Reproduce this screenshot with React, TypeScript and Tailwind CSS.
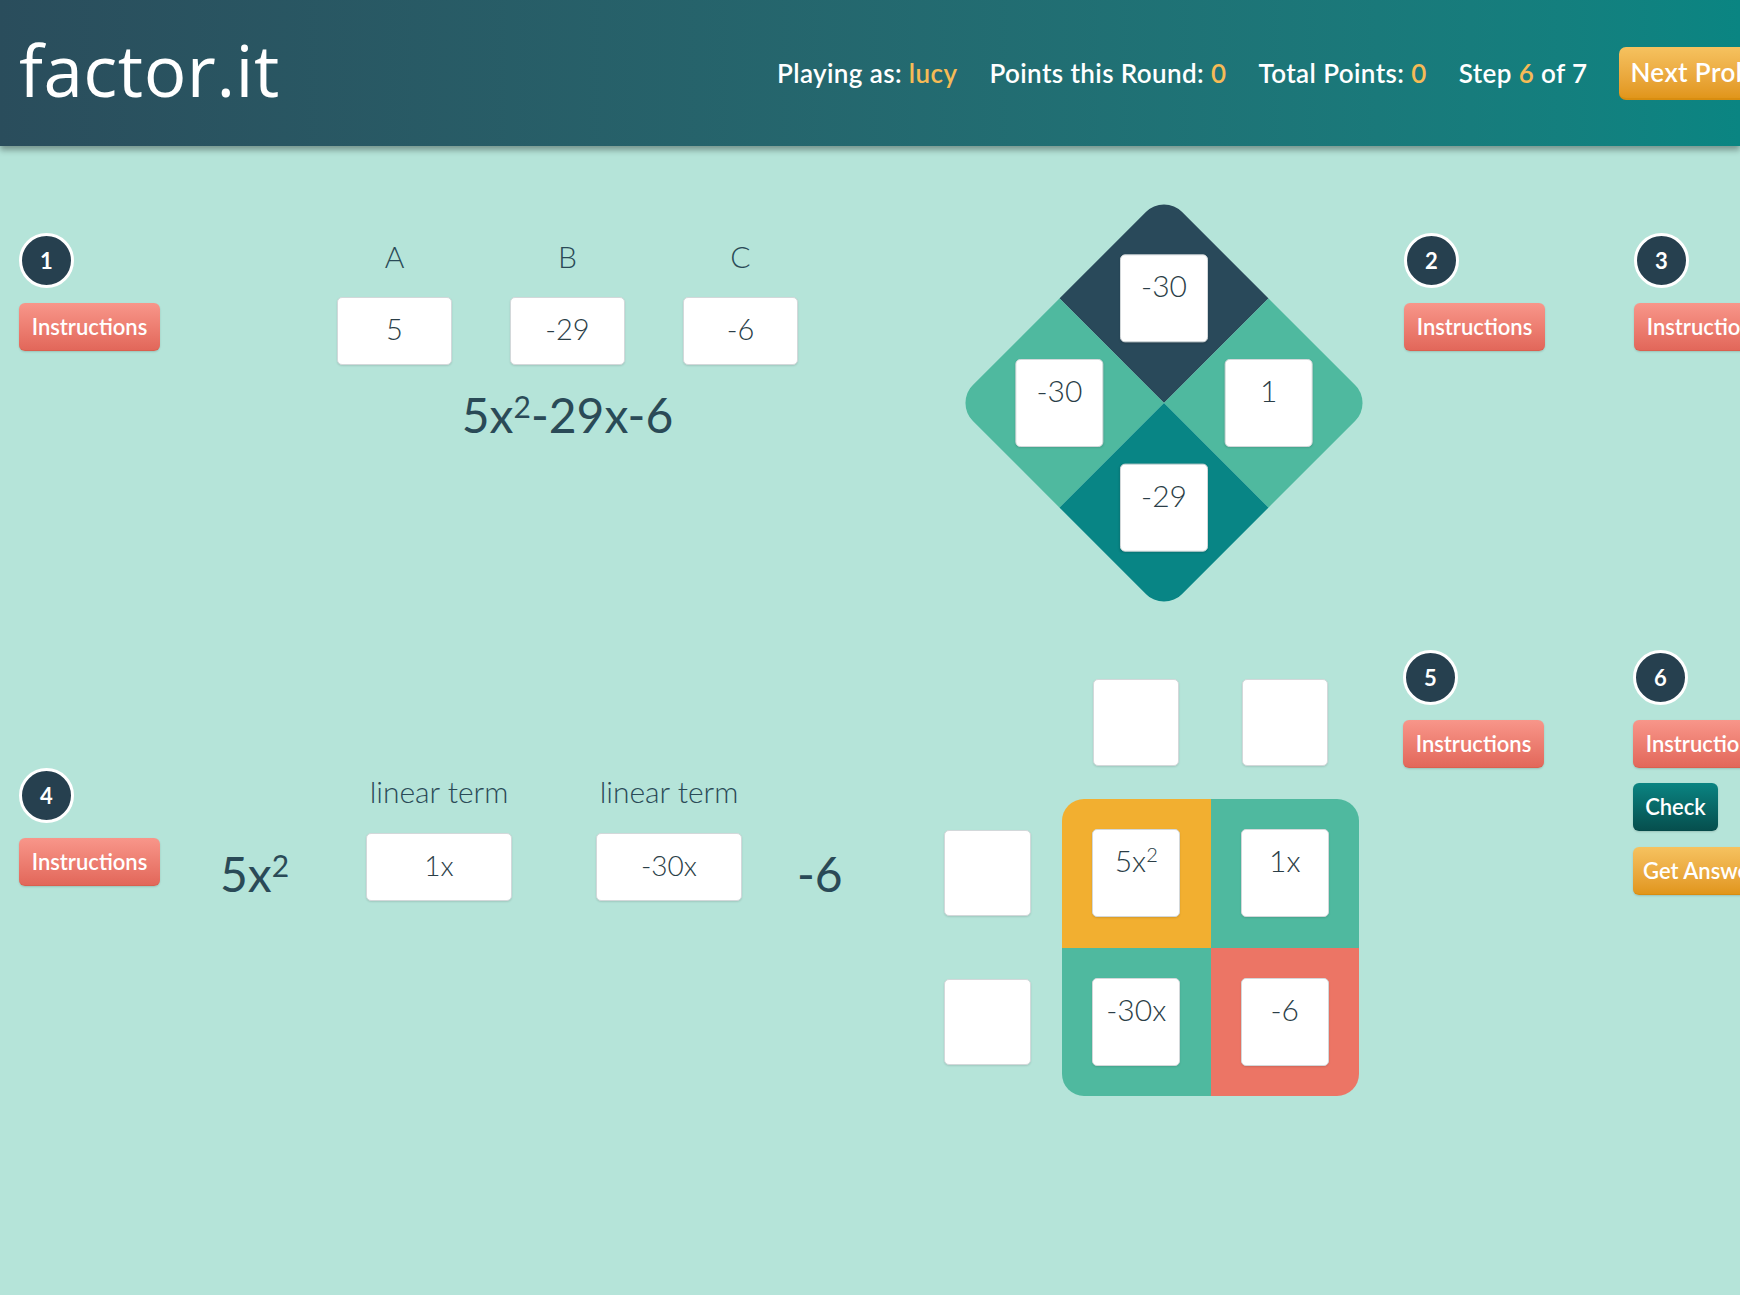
import type { ReactNode } from 'react';

const ui = "font-['Lato','Open_Sans',sans-serif]";
const hand = "font-['Lato','Open_Sans',sans-serif] font-light";

function StepMarker({ n }: { n: number }) {
  return (
    <div className="w-[55px] h-[55px] rounded-full bg-[#26404f] border-[3px] border-white flex items-center justify-center text-white text-[22px] font-bold">
      {n}
    </div>
  );
}

function Btn({
  children,
  tone,
  className = '',
}: {
  children: ReactNode;
  tone: 'red' | 'gold' | 'teal';
  className?: string;
}) {
  const tones = {
    red: 'bg-linear-to-b from-[#f8968a] to-[#e2675a] border-[#d9604f]',
    gold: 'bg-linear-to-b from-[#f6c25f] to-[#e1961a] border-[#d88d10]',
    teal: 'bg-linear-to-b from-[#0a8482] to-[#064f4e] border-[#064b4a]',
  };
  return (
    <button
      className={`h-[48px] px-[10px] rounded-[6px] border-b whitespace-nowrap text-white text-[22px] font-semibold shadow-[0_1px_2px_rgba(0,0,0,0.15)] ${tones[tone]} ${className}`}
    >
      {children}
    </button>
  );
}

function StepCol({
  n,
  extra,
  className = '',
}: {
  n: number;
  extra?: boolean;
  className?: string;
}) {
  return (
    <div className={`w-[230px] shrink-0 flex flex-col items-start ${className}`}>
      <StepMarker n={n} />
      <Btn tone="red" className="mt-[15px] w-[141px]">
        Instructions
      </Btn>
      {extra && (
        <>
          <Btn tone="teal" className="mt-[15px] w-[85px]">
            Check
          </Btn>
          <Btn tone="gold" className="mt-[16px] w-[141px] text-left">
            Get Answer
          </Btn>
        </>
      )}
    </div>
  );
}

function Tile({
  children,
  className = '',
  top = false,
}: {
  children?: ReactNode;
  className?: string;
  top?: boolean;
}) {
  return (
    <div
      className={`bg-white border border-[#d3d8da] rounded-[5px] shadow-[0_1px_2px_rgba(0,0,0,0.12)] flex justify-center text-[#2b3e47] ${
        top ? 'items-start pt-[8px]' : 'items-center'
      } ${className}`}
    >
      {children}
    </div>
  );
}

export default function App() {
  return (
    <div className={`min-h-screen w-full overflow-hidden bg-[#b5e4d9] ${ui}`}>
      <header className="relative z-10 h-[146px] flex items-center bg-linear-to-r from-[#2a4d5c] to-[#0a8582] shadow-[0_4px_6px_rgba(0,0,0,0.35)] whitespace-nowrap">
        <div className="w-[777px] shrink-0 pl-[19px] pb-[8px] text-white text-[71px] font-['Open_Sans',sans-serif] leading-none tracking-[0.5px]">
          factor.it
        </div>
        <div className="flex items-center text-white text-[26px] tracking-[0.4px] font-semibold shrink-0">
          <span>
            Playing as: <span className="text-[#f6bb56]">lucy</span>
          </span>
          <span className="ml-[32px]">
            Points this Round: <span className="text-[#f6bb56]">0</span>
          </span>
          <span className="ml-[32px]">
            Total Points: <span className="text-[#f6bb56]">0</span>
          </span>
          <span className="ml-[32px]">
            Step <span className="text-[#f6bb56]">6</span> of 7
          </span>
          <button className="ml-[32px] h-[53px] px-[11px] rounded-[7px] bg-linear-to-b from-[#f6c25f] to-[#e1961a] border-b-2 border-[#d88d10] text-white text-[26px] font-semibold">
            Next Problem
          </button>
        </div>
      </header>

      {/* row 1 */}
      <div className="flex items-start pt-[57px] whitespace-nowrap">
        <StepCol n={1} className="ml-[19px] mt-[30px] !w-[141px]" />

        <div className={`ml-[177px] mt-[33px] flex flex-col items-center text-[#2a4a57] ${hand}`}>
          <div className="flex gap-[58px]">
            {[
              ['A', '5'],
              ['B', '-29'],
              ['C', '-6'],
            ].map(([l, v]) => (
              <div key={l} className="w-[115px] flex flex-col items-center">
                <div className="h-[40px] leading-[40px] text-[30px]">{l}</div>
                <Tile className="mt-[21px] w-[115px] h-[68px] text-[29px] pb-[4px]">{v}</Tile>
              </div>
            ))}
          </div>
          <div className="mt-[26px] text-[48px] leading-none font-normal">
            5x<sup className="text-[30px]">2</sup>-29x-6
          </div>
        </div>

        <div className="ml-[166px] w-[400px] h-[400px] shrink-0 flex items-center justify-center">
          <div className="w-[296px] h-[296px] rotate-45 rounded-[26px] overflow-hidden grid grid-cols-2 grid-rows-2">
            {[
              ['bg-[#29495a]', '-30'],
              ['bg-[#4fb99f]', '1'],
              ['bg-[#4fb99f]', '-30'],
              ['bg-[#088585]', '-29'],
            ].map(([bg, v], i) => (
              <div key={i} className={`${bg} flex items-center justify-center`}>
                <Tile top className={`-rotate-45 w-[88px] h-[88px] text-[30px] ${hand}`}>
                  {v}
                </Tile>
              </div>
            ))}
          </div>
        </div>

        <StepCol n={2} className="ml-[40px] mt-[30px]" />
        <StepCol n={3} className="mt-[30px]" />
      </div>

      {/* row 2 */}
      <div className="flex items-start mt-[47px] whitespace-nowrap">
        <StepCol n={4} className="ml-[19px] mt-[118px] !w-[141px]" />

        <div className={`ml-[60px] mt-[121px] flex items-start text-[#2a4a57] ${hand}`}>
          <div className="w-[146px] mt-[78px] text-[48px] leading-[50px] font-normal">
            5x<sup className="text-[30px]">2</sup>
          </div>
          {['1x', '-30x'].map((v, i) => (
            <div
              key={v}
              className={`w-[146px] flex flex-col items-center ${i === 1 ? 'ml-[84px]' : ''}`}
            >
              <div className="h-[40px] leading-[40px] text-[30px]">linear term</div>
              <Tile className="mt-[22px] w-[146px] h-[68px] text-[28px] pb-[4px]">{v}</Tile>
            </div>
          ))}
          <div className="ml-[55px] w-[147px] mt-[78px] text-[48px] leading-[50px] font-normal">
            -6
          </div>
        </div>

        <div
          className={`mt-[29px] grid grid-cols-[118px_148.5px_148.5px] grid-rows-[120px_148.5px_148.5px] ${hand}`}
        >
          <div />
          <div className="flex justify-center items-start">
            <Tile className="w-[86px] h-[87px]" />
          </div>
          <div className="flex justify-center items-start">
            <Tile className="w-[86px] h-[87px]" />
          </div>
          <div className="flex items-center">
            <Tile className="w-[87px] h-[86px]" />
          </div>
          <div className="col-span-2 row-span-2 rounded-[22px] overflow-hidden grid grid-cols-2 grid-rows-2">
            {[
              ['bg-[#f2af30]', <span>5x<sup className="text-[20px]">2</sup></span>],
              ['bg-[#4fb99f]', '1x'],
              ['bg-[#4fb99f]', '-30x'],
              ['bg-[#ec7565]', '-6'],
            ].map(([bg, v], i) => (
              <div key={i} className={`${bg} flex items-center justify-center`}>
                <Tile top className="w-[88px] h-[88px] text-[30px]">
                  {v}
                </Tile>
              </div>
            ))}
          </div>
          <div className="flex items-center">
            <Tile className="w-[87px] h-[86px]" />
          </div>
        </div>

        <StepCol n={5} className="ml-[44px]" />
        <StepCol n={6} extra />
      </div>
    </div>
  );
}
